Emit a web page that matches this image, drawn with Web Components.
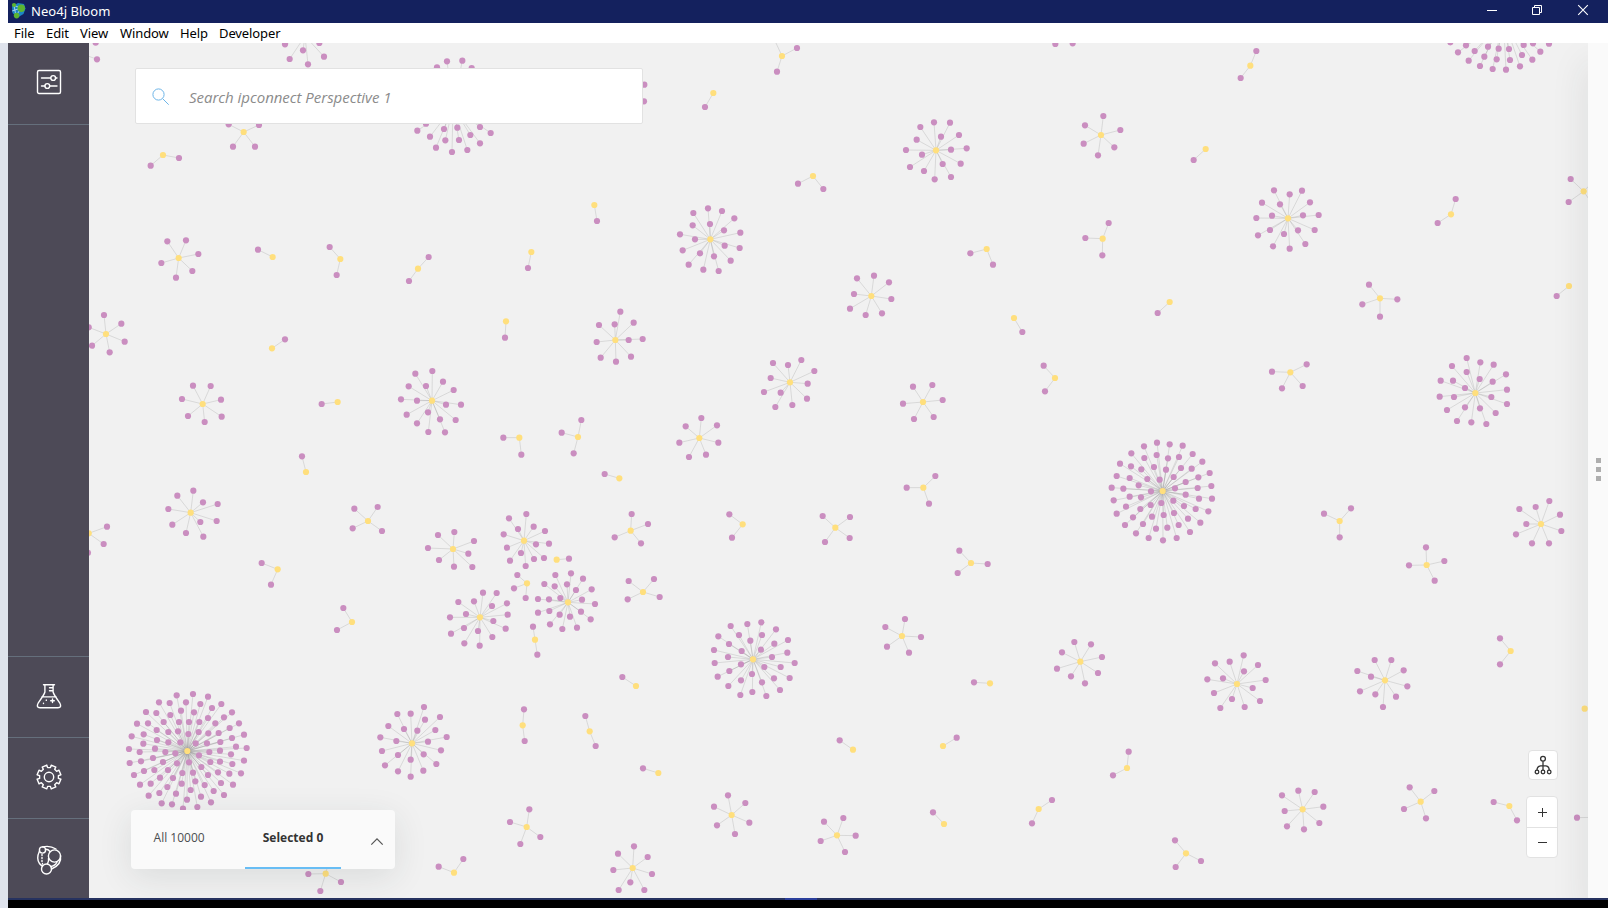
<!DOCTYPE html>
<html lang="en">
<head>
<meta charset="utf-8">
<title>Neo4j Bloom</title>
<style>
  html, body { margin: 0; height: 100%; overflow: hidden; background: #fff; }
  body { font-family: "Open Sans", "Noto Sans", sans-serif; }
</style>
</head>
<body>
<bloom-window></bloom-window>
<script>
const define = (name, html, setup) => customElements.define(name, class extends HTMLElement {
  constructor() {
    super();
    this.attachShadow({ mode: 'open' }).innerHTML = html;
    if (setup) setup(this, this.shadowRoot);
  }
});

/* Title bar of the desktop window */
define('title-bar', `
<style>
  :host { display: flex; align-items: center; height: 23px; margin-left: 8px; background: #14215e; color: #fff;
          font: 13px/23px "Noto Sans", sans-serif; }
  .logo { margin: -2px 5px 0 3px; width: 15px; height: 17px; flex: none; }
  .name { flex: 1; letter-spacing: .04px; }
  .ctl { width: 160px; height: 23px; flex: none; }
</style>
<svg class="logo" viewBox="0 0 15 17">
  <path d="M1 4.5L7 1L13 2L14.5 6.5L12.5 12L6.5 15.5L1.5 11Z" fill="#1d86c4"/>
  <path d="M3 3.5L5 14M3 3.5L10 6M10 6L5 14M1 9L10 6" stroke="#bfe3f5" stroke-width=".8" fill="none"/>
  <circle cx="3" cy="3" r="2.1" fill="#5cb531"/><circle cx="10.3" cy="6.2" r="3.7" fill="#5cb531"/><circle cx="5.6" cy="13.6" r="2.8" fill="#5cb531"/>
</svg>
<span class="name">Neo4j Bloom</span>
<svg class="ctl" viewBox="0 0 160 23" fill="none" stroke="#fff">
  <path d="M39 10.5h10"/>
  <path d="M84.500 7.500h7v7h-7zM86.500 7.500v-2h7v7h-2"/>
  <path d="M130.200 5.200l9.600 9.600M139.800 5.200l-9.600 9.600" stroke-width="1.100"/>
</svg>`);

define('menu-bar', `
<style>
  :host { display: flex; height: 20px; padding-left: 14px; background: #fff; color: #000; font: 13px/20px "Noto Sans", sans-serif; letter-spacing: -.1px; }
  ::slotted(span) { flex: none; white-space: nowrap; width: var(--w); }
</style>
<slot></slot>`);

define('side-item', `
<style>
  :host { display: flex; box-sizing: border-box; height: 81px; flex: none; align-items: center; justify-content: center; }
  :host([edge="top"]) { border-top: 1px solid #656f7c; }
  :host([edge="bottom"]) { height: 82px; padding-bottom: 2px; border-bottom: 1px solid #656f7c; }
  :host([last]) { height: 80px; }
</style>
<slot></slot>`);

define('side-rail', `
<style>
  :host { display: flex; flex-direction: column; width: 81px; background: #4d4a57; }
  .gap { flex: 1; }
  svg { display: block; width: 26px; height: 30px; overflow: visible; fill: none; stroke: #fff; stroke-width: 1.400; stroke-linejoin: round; stroke-linecap: round; }
</style>
<side-item edge="bottom"><svg viewBox="0 0 26 30">
  <rect x="1.500" y="2.500" width="23" height="23" rx="1.500"/>
  <path d="M5.500 10h9M19.500 10h1.500M5.500 18h3.500M14 18h7"/><circle cx="17.200" cy="10" r="2.400"/><circle cx="11.300" cy="18" r="2.400"/></svg></side-item>
<div class="gap"></div>
<side-item edge="top"><svg viewBox="0 0 26 30">
  <path d="M7.500 2.700h11M8.900 3v7Q8.300 12.500 2.300 20.800Q-.2 25.700 4 25.700h18Q26.200 25.700 23.700 20.800Q17.700 12.500 17.100 10V3M13.500 5.700h3.500M13.500 8.700h3.500M5.800 14.900h14.400"/>
  <path d="M16.500 17v3.600M14.700 18.800h3.600M10.300 18v.4M7.500 21.200v.4"/></svg></side-item>
<side-item edge="top"><svg id="gear" viewBox="0 0.500 26 30"><path/><circle cx="13" cy="14.500" r="4.700"/></svg></side-item>
<side-item edge="top" last><svg viewBox="0 -0.500 26 30">
  <circle cx="6.500" cy="5.500" r="3.100"/><circle cx="18.500" cy="11.500" r="6.100"/><circle cx="10.500" cy="24.500" r="5"/>
  <path d="M6.500 2.400Q14 .6 20 4.500M9.500 4.800Q12 4.600 14 7M3.500 6.500Q0 14 3.500 19Q4.500 20.500 6.500 21.500M24.500 11Q26 20 15.500 24.500M21 17.500Q19.500 21 15 22M12.500 14Q13 16 11.500 19.300"/>
  <path d="M6 10v1M6 13v1M6 16v1M6.500 19v.5"/></svg></side-item>`, (host, root) => {
  /* eight rounded teeth */
  let d = '';
  for (let i = 0; i < 8; i++) {
    [[-14, 9.500], [-12, 12.100], [12, 12.100], [14, 9.500]].forEach(([a, r], j) => {
      const t = (22.5 + 45 * i + a) * Math.PI / 180;
      d += (i + j ? 'L' : 'M') + (13 + r * Math.sin(t)).toFixed(2) + ' ' + (14.5 - r * Math.cos(t)).toFixed(2);
    });
  }
  root.querySelector('#gear path').setAttribute('d', d + 'Z');
});

/* Stars of the graph. Each block: scene origin, then one star per entry (hub first, leaves after), in thirds of a pixel. */
const SCENE = [
[88, 40, `-30 37 27 58;23 -30 23 8;651 -12 591 13 605 57 645 31 660 73 708 50 694 9
1095 200 1047 82 1077 64 1123 62 1151 84 988 272 1014 251 1026 290 1044 323 1068 267 1072 301 1108 263 1113 300 1092 336 1138 330 1147 285 1176 261 1176 310 1208 279
467 276 422 253 513 255 435 320 501 320;225 345 188 377 273 354;272 654 238 604 294 601 331 642 313 693 264 713 220 669
554 651 510 629;757 657 725 621 746 705;990 686 1022 651 963 723;1330 636 1320 684;54 882 48 825 100 851 2 862 12 917 110 905 65 937;1254 844 1251 893`],
[588, 40, `582 48 627 24 567 95 557 -6;376 159 351 201;110 160 169 134 168 184
1044 331 997 261 1038 247 1086 248 1113 285 1059 290 986 299 954 330 1089 329 1136 325 1002 344 966 381 1064 372 1118 371 1008 393 1040 418 1089 411
675 408 630 431 706 447;19 495 27 543
367 598 316 519 360 505 402 513 439 535 314 556 366 552 408 571 457 578 276 583 321 598 410 617 455 624 284 631 336 640 378 649 428 662 302 674 346 689 392 693
1196 627 1147 640 1215 674;850 768 807 715 858 707 903 727 910 777 882 820 833 825 786 806 798 762;1428 -30 1402 12 1454 10
82 900 97 815 33 855 80 853 137 848 26 906 122 900 164 897 38 953 84 965 129 950;1278 834 1303 876`],
[1088, 40, `39 285 -9 256 -13 311 46 228 97 270 79 322 30 346;487 77 505 33 458 114;353 327 317 360;44 596 62 549 43 646 -8 594
600 535 558 451 605 463 642 452 522 488 576 493 666 487 505 534 552 527 645 526 692 525 510 586 546 570 588 582 630 571 680 570 555 619 605 626 652 612
1089 523 1103 477 1049 549;1487 454 1448 417 1442 486 1525 415 1518 500;876 775 843 734 928 778 823 793 876 830;1443 738 1406 768;245 786 209 819
1246 -65 1087 7 1134 16 1110 37 1160 33 1142 62 1200 20 1189 50 1176 78 1232 26 1226 58 1214 87 1263 27 1266 60 1254 89 1302 45 1307 15 1296 79 1333 59 1357 35 1335 10 1383 11`],
[88, 330, `552 55 591 28;344 222 315 167 368 168 282 207 399 209 300 258 401 260 350 276;749 216 701 222
1032 212 982 131 1033 123 1065 155 962 169 1014 168 1097 180 939 208 987 212 1074 224 1119 224 956 254 1020 247 987 280 1056 268 1103 270 1021 306 1071 307
1294 323 1246 323 1300 374;1470 321 1480 270 1421 308 1457 370;654 426 642 379
308 548 268 497 316 482 345 517 389 522 241 537 386 573 337 576 253 584 294 609 346 620;840 573 799 536 869 531 794 595 882 603;2 610 57 590 47 642 0 668
1095 657 1050 615 1099 606 1158 633 1020 654 1141 671 1053 690 1098 710 1153 711
1308 632 1263 565 1315 552 1337 590 1290 597 1371 603 1247 613 1383 641 1344 643 1257 653 1299 669 1338 687 1368 684 1266 692 1313 708
1406 689 1443 686;1317 760 1288 735 1278 775 1313 804;569 718 521 699 549 764
1440 817 1402 735 1449 730 1485 746 1369 762 1400 769 1437 763 1464 780 1350 807 1383 808 1417 804 1482 809 1350 848 1384 843 1415 854 1446 860 1479 845 1511 778 1521 822 1508 868 1386 883 1423 897 1467 893
1176 862 1185 788 1226 789 1111 816 1158 814 1257 820 1212 828 1134 852 1086 862 1259 854 1216 873 1253 896 1213 921 1175 947 1129 940 1089 911 1128 894 1170 903
792 876 766 834 747 900`],
[588, 330, `606 157 555 99 600 105 640 90 679 123 548 144 659 161 528 186 578 188 657 206 562 231 613 225
1005 216 975 170 1033 165 945 221 1064 210 978 267 1037 261;1401 144 1367 107 1371 184;334 324 340 264 293 289 387 286 274 338 391 338 303 381 354 374
94 445 50 432;1006 473 1042 438 956 473 1023 521;128 602 131 552 180 582 80 622 159 640;464 583 424 553 432 623
742 593 704 558 786 561 711 636 785 624;1149 699 1114 662 1199 702 1109 729;165 786 122 753 198 747 119 808 215 801`],
[1088, 330, `607 127 552 125 656 103 582 175 644 168
1162 189 1136 84 1177 97 1217 104 1092 108 1136 126 1254 133 1058 152 1095 152 1175 147 1214 155 1131 174 1257 179 1055 200 1098 201 1210 201 1257 222 1077 240 1131 232 1176 235 1223 249 1107 273 1150 277 1195 282
224 483 168 349 207 338 245 343 284 347 130 370 314 372 169 384 206 375 240 385 273 381 96 401 343 395 129 409 160 418 198 411 234 419 279 414 311 416 365 429 86 438 125 444 178 447 215 449 257 441 331 442 293 456 152 466 370 468 71 473 106 476 189 484 261 475 329 474 77 511 125 500 159 502 293 494 333 506 372 506 188 525 220 519 256 512 288 528 323 537 361 544 114 530 157 537 86 551 135 562 192 560 227 555 258 549 300 566 337 578 111 585 165 582 204 596 238 593 272 585 306 606 144 610 182 624 225 631 266 624
755 573 708 551 789 535 755 622;1359 582 1384 513 1294 537 1343 531 1416 554 1315 582 1284 613 1420 603 1332 640 1383 640;1016 705 1014 652 1069 693 963 706 1040 752`],
[88, 620, `298 393 266 226 315 222 360 230 213 247 245 249 294 247 337 252 400 252 372 264 174 276 205 279 279 272 318 277 432 277 247 285 408 292 360 294 147 311 180 310 227 306 273 306 303 306 334 306 382 310 453 310 425 324 206 330 241 336 270 334 332 336 361 340 392 339 131 349 167 343 301 342 468 344 432 354 207 360 241 367 277 367 323 370 357 370 397 366 166 371 444 380 123 387 201 386 476 384 155 396 232 396 262 400 333 406 364 396 396 392 429 403 159 424 195 414 125 429 225 426 267 430 303 427 367 426 396 425 468 422 433 432 340 441 168 453 199 450 240 450 138 465 283 459 315 458 390 457 360 465 424 461 459 460 216 473 255 474 156 494 188 491 238 501 281 491 322 484 350 495 399 489 435 494 182 527 214 519 264 521 308 510 377 513 339 530 408 525 221 550 252 553 297 539 369 547 328 561 285 566
972 370 1008 261 928 282 968 281 1011 299 1056 291 901 318 948 327 988 332 1042 330 877 352 925 363 1020 365 1076 351 882 393 930 405 1007 403 1059 391 968 419 891 436 1045 432 930 454 1006 452 968 470
1304 316 1308 268 1310 363;1341 59 1335 20 1348 104;1505 334 1492 288 1523 378;1316 621 1324 568 1266 606 1357 651 1297 672
713 761 661 762 759 786 697 813 725 715;1098 758 1052 740 1126 717`],
[588, 620, `495 118 478 12 520 7 428 18 564 28 391 49 453 45 522 45 487 62 600 60 423 72 559 71 378 90 461 93 519 89 598 98 420 111 552 111 380 129 459 133 529 141 578 141 620 129 424 153 389 170 492 162 558 175 605 174 459 181 522 187 421 198 576 210 457 225 493 216 535 228
942 48 892 21 951 -3 999 51 897 80 963 98;144 198 103 171;1206 190 1158 187;1477 125 1459 66 1422 97 1407 146 1449 169 1491 190 1509 73 1542 111 1530 159
795 389 755 361;1065 378 1106 353;211 459 165 445;431 585 420 526 472 549 378 560 387 616 484 608 441 642
747 646 708 605 766 594 803 647 698 663 771 696;1068 612 1035 577;1352 567 1392 540 1332 610;134 744 138 679 90 701 179 711 76 750 192 762 127 787 92 810 169 810`],
[1088, 620, `447 192 467 106 425 125 381 130 510 135 468 154 358 178 405 175 533 180 494 204 378 219 432 237 516 243 397 264 470 261
891 181 860 120 910 120 808 153 947 151 849 170 958 199 816 214 862 223 924 230 885 261;1268 93 1236 55 1236 133;1490 266;117 444 122 395 75 466
644 568 582 526 631 512 680 516 590 573 706 560 597 619 694 609 648 628;998 545 965 502 1039 513 948 567 1014 595
1264 558 1217 546 1287 601;1515 592 1467 593;294 700 261 661 263 741 339 723`]
];

define('graph-scene', `
<style>
  :host { display: block; width: 100%; height: 100%; }
  svg { display: block; width: 100%; height: 100%; }
</style>
<svg><g transform="translate(-89 -43)"><g id="edges" stroke="#888" stroke-opacity=".3" stroke-width=".8"></g><g id="leaves" fill="#ca8ec0"></g><g id="hubs" fill="#ffdf7d"></g></g></svg>`, (host, root) => {
  let edges = '', leaves = '', hubs = '';
  const dot = (x, y) => `<circle cx="${x.toFixed(2)}" cy="${y.toFixed(2)}" r="3.100"/>`;
  for (const [ox, oy, text] of SCENE) {
    for (const star of text.split(/[;\n]+/)) {
      const v = star.trim().split(/\s+/).map(Number);
      const px = i => ox + v[i] / 3, py = i => oy + v[i + 1] / 3;
      hubs += dot(px(0), py(0));
      for (let i = 2; i < v.length; i += 2) {
        edges += `<line x1="${px(0).toFixed(2)}" y1="${py(0).toFixed(2)}" x2="${px(i).toFixed(2)}" y2="${py(i).toFixed(2)}"/>`;
        leaves += dot(px(i), py(i));
      }
    }
  }
  root.querySelector('#edges').innerHTML = edges;
  root.querySelector('#leaves').innerHTML = leaves;
  root.querySelector('#hubs').innerHTML = hubs;
});

define('search-box', `
<style>
  :host { display: flex; box-sizing: border-box; width: 508px; height: 56px; align-items: center; background: #fff; border: 1px solid #e2e2e2; border-radius: 2px;
          color: #8b8b8b; font: italic 15px/20px "Open Sans", sans-serif; letter-spacing: -.03px; }
  svg { width: 18px; height: 18px; margin: 2px 19.500px 0 15.500px; flex: none; overflow: visible; fill: none; stroke: #6db5e8; stroke-width: 1; }
  span { padding-top: 1px; white-space: nowrap; }
</style>
<svg viewBox="0 0 18 18"><circle cx="6.500" cy="6.500" r="5.600"/><path d="M10.700 10.700L16.700 16.700"/></svg>
<span><slot></slot></span>`);

define('selection-card', `
<style>
  :host { display: flex; width: 264px; height: 59px; background: #fafafa; border-radius: 4px; box-shadow: 0 8px 34px rgba(40,55,55,.11); color: #4a4d50;
          font: 12px/16px "Open Sans", sans-serif; }
  .tab { box-sizing: border-box; padding-top: 20px; white-space: nowrap; }
  .all { width: 114px; padding-left: 22.6px; }
  .sel { width: 96px; text-align: center; font-weight: 700; color: #333; border-bottom: 2px solid #68bdf4; }
  svg { width: 54px; height: 59px; fill: none; stroke: #555; stroke-width: 1.200; }
</style>
<div class="tab all">All 10000</div><div class="tab sel">Selected 0</div>
<svg viewBox="0 0 54 59"><path d="M30.300 34.600L36 28.800L41.700 34.600"/></svg>`);

define('view-controls', `
<style>
  :host { display: flex; flex-direction: column; align-items: flex-end; gap: 16px; width: 32px; }
  .btn { box-sizing: border-box; background: #fff; border: 1px solid #e2e2e2; border-radius: 4px; }
  .one { width: 30px; height: 30px; }
  .two { width: 32px; height: 62px; }
  svg { display: block; fill: none; stroke: #333; }
</style>
<div class="btn one"><svg width="28" height="28" stroke-width="1.300"><circle cx="14" cy="7.800" r="2.400"/><circle cx="8" cy="21" r="1.800"/><circle cx="14" cy="21" r="1.800"/><circle cx="20.200" cy="21" r="1.800"/><path d="M14 10.200v9M8 19.200Q8 15.300 11.500 14.800H17Q20.200 15.300 20.200 19.200"/></svg></div>
<div class="btn two"><svg width="30" height="60"><path d="M11 15.500h9M15.500 11v9"/><path d="M0 30.500h30" stroke="#e2e2e2"/><path d="M11 45.500h9"/></svg></div>`);

define('side-drawer', `
<style>
  :host { display: flex; flex-direction: column; gap: 4px; align-items: center; justify-content: center; width: 20px; background: #fafafa; box-shadow: 0 20px 36px rgba(40,50,50,.13); position: relative; }
  i { width: 5px; height: 5px; background: #aeaeae; margin-left: 1px; position: relative; top: -1px; }
</style>
<i></i><i></i><i></i>`);

define('bloom-window', `
<style>
  :host { display: grid; grid-template-rows: 23px 20px 855px 10px; width: 1608px; height: 908px; overflow: hidden; }
  .main { display: grid; grid-template-columns: 8px 81px 1499px 20px; overflow: hidden; }
  .desk { background: #dfe3ec; }
  .stage { position: relative; background: #f1f1f1; overflow: hidden; }
  search-box { position: absolute; left: 46px; top: 25px; }
  selection-card { position: absolute; left: 42px; top: 767px; }
  view-controls { position: absolute; left: 1437px; top: 707px; }
  .foot { display: grid; grid-template-columns: 8px 777px 32px 1fr; }
  .foot div { background: #000; border-top: 2px solid #26325f; }
  .foot .desk { background: #dfe3ec; border: 0; }
  .foot .lit { border-color: #2b3f9c; }
</style>
<title-bar></title-bar>
<menu-bar>
  <span style="--w:32px">File</span><span style="--w:34px">Edit</span><span style="--w:40px">View</span><span style="--w:60px">Window</span><span style="--w:39px">Help</span><span style="--w:70px">Developer</span>
</menu-bar>
<div class="main">
  <div class="desk"></div>
  <side-rail></side-rail>
  <div class="stage"><graph-scene></graph-scene><search-box>Search ipconnect Perspective 1</search-box><selection-card></selection-card><view-controls></view-controls></div>
  <side-drawer></side-drawer>
</div>
<div class="foot"><div class="desk"></div><div></div><div class="lit"></div><div></div></div>`);
</script>
</body>
</html>
